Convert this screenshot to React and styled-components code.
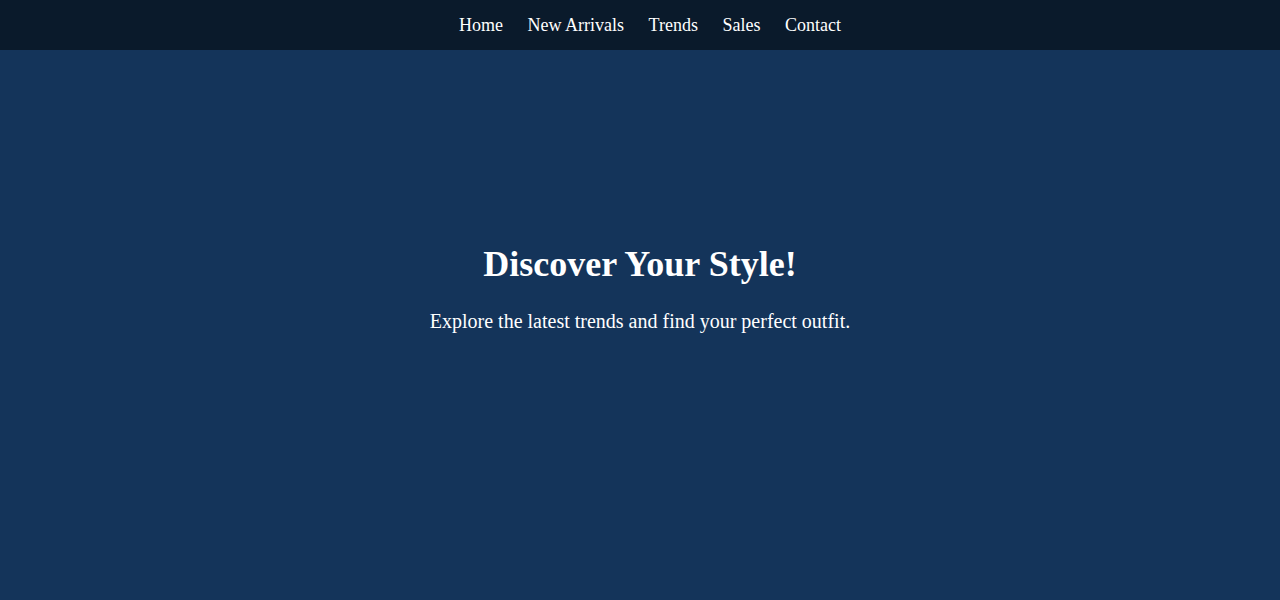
import React from 'react';
import styled, { createGlobalStyle } from 'styled-components';

const GlobalStyle = createGlobalStyle`
  body {
    margin: 0;
    font-family: "Liberation Serif", "Times New Roman", serif;
    background: #14345a;
    color: #fff;
  }
`;

const NavBar = styled.nav`
  height: 50px;
  background: #0a1a2b;
  display: flex;
  justify-content: center;
  align-items: center;
  gap: 24.5px;
  padding-left: 20px;
  box-sizing: border-box;
`;

const NavLink = styled.a`
  color: #fff;
  text-decoration: none;
  font-size: 18px;
  cursor: pointer;
`;

const Hero = styled.section`
  height: 550px;
  background: #14345a;
  display: flex;
  flex-direction: column;
  align-items: center;
  padding-top: 193px;
  box-sizing: border-box;
  text-align: center;
`;

const Title = styled.h1`
  font-size: 36px;
  margin: 0 0 25px;
`;

const Subtitle = styled.p`
  font-size: 20px;
  margin: 0;
`;

const links = ['Home', 'New Arrivals', 'Trends', 'Sales', 'Contact'];

export default function App() {
  return (
    <>
      <GlobalStyle />
      <NavBar>
        {links.map((l) => (
          <NavLink key={l}>{l}</NavLink>
        ))}
      </NavBar>
      <Hero>
        <Title>Discover Your Style!</Title>
        <Subtitle>Explore the latest trends and find your perfect outfit.</Subtitle>
      </Hero>
    </>
  );
}
